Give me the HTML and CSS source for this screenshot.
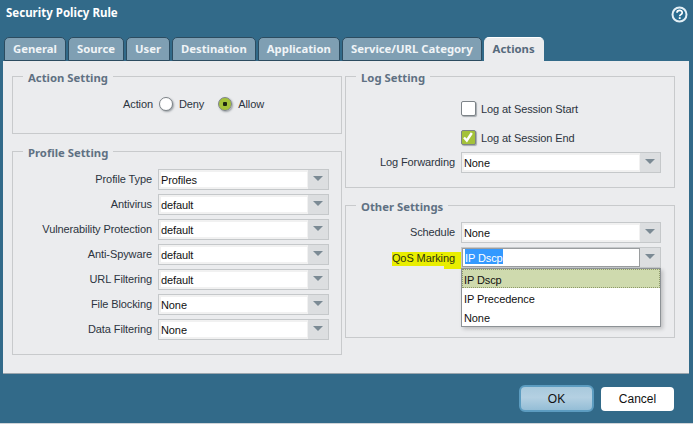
FILE: index.html
```html
<!DOCTYPE html>
<html lang="en">
<head>
<meta charset="utf-8">
<title>Security Policy Rule</title>
<link rel="stylesheet" href="styles.css">
</head>
<body>
<div class="dialog">
  <header class="titlebar">
    <h1 class="title">Security Policy Rule</h1>
    <svg class="help" width="17" height="17" viewBox="0 0 17 17">
      <circle cx="8.5" cy="8.5" r="7" fill="#2a6c90" stroke="#e4f0f6" stroke-width="2"/>
      <path d="M6 6.8c0-3.2 5.2-3.2 5.2-.1 0 2-2.5 1.9-2.5 3.6" fill="none" stroke="#fff" stroke-width="1.7"/>
      <rect x="7.8" y="11.2" width="1.8" height="1.8" fill="#fff"/>
    </svg>
  </header>
  <nav class="tabs">
    <span class="tab">General</span>
    <span class="tab">Source</span>
    <span class="tab">User</span>
    <span class="tab">Destination</span>
    <span class="tab">Application</span>
    <span class="tab">Service/URL Category</span>
    <span class="tab tab-active">Actions</span>
  </nav>
  <main class="panel">
    <div class="column">
      <fieldset class="group group-action">
        <legend>Action Setting</legend>
        <div class="radios">
          <span class="radio-label">Action</span>
          <span class="radio"></span><span class="radio-text">Deny</span>
          <span class="radio radio-on"></span><span class="radio-text">Allow</span>
        </div>
      </fieldset>
      <fieldset class="group group-profile">
        <legend>Profile Setting</legend>
        <div class="form form-left">
          <label>Profile Type</label><div class="combo"><span class="field">Profiles</span><span class="arrow"></span></div>
          <label>Antivirus</label><div class="combo"><span class="field">default</span><span class="arrow"></span></div>
          <label>Vulnerability Protection</label><div class="combo"><span class="field">default</span><span class="arrow"></span></div>
          <label>Anti-Spyware</label><div class="combo"><span class="field">default</span><span class="arrow"></span></div>
          <label>URL Filtering</label><div class="combo"><span class="field">default</span><span class="arrow"></span></div>
          <label>File Blocking</label><div class="combo"><span class="field">None</span><span class="arrow"></span></div>
          <label>Data Filtering</label><div class="combo"><span class="field">None</span><span class="arrow"></span></div>
        </div>
      </fieldset>
    </div>
    <div class="column">
      <fieldset class="group group-log">
        <legend>Log Setting</legend>
        <div class="checks">
          <div class="check-row"><span class="check"></span><span class="check-text">Log at Session Start</span></div>
          <div class="check-row"><span class="check check-on"><svg width="14" height="14" viewBox="0 0 14 14"><path d="M3 7.5l2.8 3 5-7.5" fill="none" stroke="#fff" stroke-width="2.4"/></svg></span><span class="check-text">Log at Session End</span></div>
        </div>
        <div class="form form-right">
          <label>Log Forwarding</label><div class="combo"><span class="field">None</span><span class="arrow"></span></div>
        </div>
      </fieldset>
      <fieldset class="group group-other">
        <legend>Other Settings</legend>
        <div class="form form-right">
          <label>Schedule</label><div class="combo"><span class="field">None</span><span class="arrow"></span></div>
          <label class="marked">QoS Marking</label>
          <div class="combo combo-open">
            <span class="field field-focus"><span class="selected">IP Dscp</span></span><span class="arrow"></span>
            <ul class="menu">
              <li class="menu-active">IP Dscp</li>
              <li>IP Precedence</li>
              <li>None</li>
            </ul>
          </div>
        </div>
      </fieldset>
    </div>
  </main>
  <footer class="actions">
    <button class="btn btn-primary">OK</button>
    <button class="btn">Cancel</button>
  </footer>
</div>
</body>
</html>
```
FILE: styles.css
```css
* { box-sizing: border-box; }
html, body { margin: 0; height: 100%; }
body { background: #326a89; font-family: "Liberation Sans", Arial, sans-serif; font-size: 11px; letter-spacing: -0.1px; color: #2c3440; overflow: hidden; }
.dialog { width: 693px; height: 424px; display: flex; flex-direction: column; border-bottom: 1px solid #d0d4d8; }
.titlebar { height: 37px; display: flex; justify-content: space-between; padding: 4px 5px 0 6px; }
.title { margin: 0; font-family: "Noto Sans", sans-serif; font-size: 11.5px; font-weight: 700; letter-spacing: 0; line-height: 18px; color: #fff; }
.help { margin-top: 2px; }
.tabs { height: 24px; display: flex; gap: 2px; padding-left: 4px; }
.tab { height: 24px; padding: 0 8px; line-height: 21px; font-family: "Noto Sans", sans-serif; font-size: 11.3px; font-weight: 700; letter-spacing: 0; color: #f0f4f7; background: #7f9fb3; border: 1px solid #2c4c60; border-radius: 5px 5px 0 0; }
.tab-active { background: #ebecee; color: #566a7c; border-color: #ffffff #ebecee #ebecee; }
.panel { width: 686px; height: 313px; margin-left: 3px; background: #ebecee; border-bottom: 1px solid #9aa5ad; display: flex; gap: 3px; padding: 8px 0 0 9px; }
.column { width: 330px; display: flex; flex-direction: column; gap: 10px; }
.group { margin: 0; padding: 0; border: 1px solid #c8cacc; min-width: 0; }
.group legend { margin-left: 10px; padding: 2px 5px 0; height: 14px; font-family: "Noto Sans", sans-serif; font-size: 11.3px; font-weight: 700; letter-spacing: 0; color: #5f7183; line-height: 14px; }
.group-action { height: 65px; }
.group-profile { height: 211px; }
.group-log { height: 119px; }
.group-other { height: 140px; }
.radios { display: flex; align-items: center; padding: 14px 0 0 110px; }
.radio-label { margin-right: 6px; }
.radio { width: 14px; height: 14px; border-radius: 50%; background: #fff; border: 1px solid #7d8388; box-shadow: 1px 1px 2px #9aa0a5; margin-right: 6px; }
.radio-on { background: radial-gradient(circle, #1c2410 0 2px, #a4c23a 2.5px); }
.radio-text { margin-right: 14px; }
.form { display: grid; align-items: center; row-gap: 4px; column-gap: 6px; }
.form-left { grid-template-columns: 139px 171px; padding-top: 11px; }
.form-right { grid-template-columns: 109px 200px; }
.form label { text-align: right; line-height: 16px; padding-bottom: 1px; }
.combo { position: relative; display: flex; height: 21px; border: 1px solid #c5c8ca; }
.field { flex: 1; background: #fff; border: 2px solid #f1f1f1; border-right-width: 1px; line-height: 17px; color: #111; }
.arrow { width: 20px; background: #dcdee0; position: relative; }
.arrow::after { content: ""; position: absolute; left: 5px; top: 6px; border: 5px solid transparent; border-bottom: 0; border-top: 5px solid #7b8a94; }
.checks { padding: 18px 0 0 115px; display: flex; flex-direction: column; gap: 15px; margin-bottom: 8px; }
.check-row { display: flex; align-items: center; gap: 5px; height: 14px; }
.check-text { padding-top: 2px; }
.check { width: 15px; height: 15px; background: #fff; border: 1px solid #7d8388; border-radius: 2px; box-shadow: 1px 1px 1px #a5aaae; display: block; }
.check-on { background: #a4c23a; }
.check-on svg { display: block; margin: -1px 0 0 -1px; }
.group-other .form { padding-top: 10px; }
.form .marked { justify-self: end; align-self: start; position: relative; margin: 5px -6px 0 0; padding: 0 6px 3px 0; line-height: 13px; height: 14px; background: #e9ee00; color: #2c3410; }
.marked::after { content: ""; position: absolute; right: 0; top: 100%; width: 17px; height: 3px; background: #e9ee00; }
.field-focus { border: 1px solid #9a9d9f; padding-left: 2px; }
.selected { background: #3399ff; color: #fff; display: inline-block; height: 15px; line-height: 18px; }
.menu { position: absolute; left: -1px; top: 20px; width: 200px; height: 59px; margin: 0; padding: 0; list-style: none; background: #fff; border: 1px solid #8d9296; box-shadow: 2px 2px 4px rgba(0,0,0,.2); color: #111; z-index: 2; }
.menu li { height: 19px; line-height: 22px; padding-left: 2px; }
.menu .menu-active { background: #cfdaae; outline: 1px dotted #8e9a6a; outline-offset: -1px; }
.actions { flex: 1; display: flex; justify-content: flex-end; align-items: center; gap: 7px; padding-right: 19px; }
.btn { width: 73px; height: 24px; font: inherit; font-size: 12px; color: #111; background: #fff; border: 0; border-radius: 4px; padding: 0; }
.btn-primary { width: 75px; height: 27px; background: linear-gradient(#a8c9dc, #b4d0e2 45%, #94bdd6); border: 2px solid #5c9cc0; border-radius: 6px; }
```
